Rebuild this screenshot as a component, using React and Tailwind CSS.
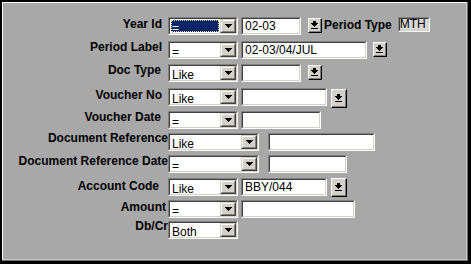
import React from 'react';

// 3D sunken edit box in the old Windows style
function Sunken({ className = '', bg = 'bg-white', children }) {
  return (
    <div className={`shrink-0 border border-t-[#808080] border-l-[#808080] border-b-white border-r-white ${className}`}>
      <div className={`flex h-full overflow-hidden border border-t-[#404040] border-l-[#404040] border-b-[#d4d0c8] border-r-[#d4d0c8] ${bg}`}>
        {children}
      </div>
    </div>
  );
}

function DropButton() {
  return (
    <div className="h-full w-[16px] shrink-0 border border-t-[#d4d0c8] border-l-[#d4d0c8] border-b-[#404040] border-r-[#404040]">
      <div className="flex h-full items-center justify-center border border-t-white border-l-white border-b-[#808080] border-r-[#808080] bg-[#d4d0c8]">
        <svg width="7" height="4" viewBox="0 0 7 4" shapeRendering="crispEdges">
          <path d="M0 0h7v1h-1v1h-1v1h-1v1h-1v-1h-1v-1h-1v-1h-1z" fill="#000" />
        </svg>
      </div>
    </div>
  );
}

function Combo({ value, width, selected }) {
  return (
    <Sunken className={`h-[18px] ${width}`}>
      <div className="min-w-0 flex-1 p-[1px]">
        <div
          className={`h-full pl-[1px] leading-[16px] whitespace-nowrap ${
            selected ? 'bg-[#0c246a] text-white outline-1 outline-dotted outline-[#e8dc8a] -outline-offset-1' : 'text-black'
          }`}
        >
          {value}
        </div>
      </div>
      <DropButton />
    </Sunken>
  );
}

function Field({ value, width, className = '' }) {
  return (
    <Sunken className={`h-[18px] ${width} ${className}`}>
      <div className="pl-[2px] leading-[14px] whitespace-nowrap text-black">{value}</div>
    </Sunken>
  );
}

function Lookup({ big, className = '' }) {
  return (
    <div
      className={`shrink-0 border border-t-white border-l-white border-b-black border-r-black ${
        big ? 'h-[19px] w-[16px]' : 'h-[15px] w-[14px]'
      } ${className}`}
    >
      <div className="flex h-full items-center justify-center border-b border-r border-b-[#808080] border-r-[#808080] bg-[#d4d0c8]">
        <svg width="7" height="8" viewBox="0 0 7 8" shapeRendering="crispEdges">
          <path d="M2 0h3v2h2v1h-1v1h-1v1h-1v1h-1v-1h-1v-1h-1v-1h-1v-1h2z" fill="#000" />
          <rect x="0" y="7" width="7" height="1" fill="#000" />
        </svg>
      </div>
    </div>
  );
}

const rows = [
  { label: 'Year Id', rowMt: '', lab: 'pr-[6px] pt-[1px]', op: '=', cw: 'w-[70px]', selected: true, input: '02-03', iw: 'w-[60px]', im: 'ml-[3px]', lookup: 'ml-[7px] mt-[1px]', period: true },
  { label: 'Period Label', rowMt: 'mt-[6px]', lab: 'pr-[6px]', op: '=', cw: 'w-[70px]', input: '02-03/04/JUL', iw: 'w-[126px]', im: 'ml-[3px]', lookup: 'ml-[6px] mt-[1px]' },
  { label: 'Doc Type', rowMt: 'mt-[5px]', lab: 'pr-[7px]', op: 'Like', cw: 'w-[70px]', input: '', iw: 'w-[60px]', im: 'ml-[3px]', lookup: 'ml-[7px] mt-[1px]' },
  { label: 'Voucher No', rowMt: 'mt-[6px]', lab: 'pr-[6px] pt-[1px]', op: 'Like', cw: 'w-[70px]', input: '', iw: 'w-[86px]', im: 'ml-[3px]', lookup: 'ml-[4px] mt-[1px]', big: true },
  { label: 'Voucher Date', rowMt: 'mt-[5px]', lab: 'pr-[7px]', op: '=', cw: 'w-[70px]', input: '', iw: 'w-[80px]', im: 'ml-[3px]' },
  { label: 'Document Reference', rowMt: 'mt-[4px]', lab: 'pr-0 -mt-[1px]', op: 'Like', cw: 'w-[91px]', input: '', iw: 'w-[107px]', im: 'ml-[9px]' },
  { label: 'Document Reference Date', rowMt: 'mt-[4px]', lab: 'pr-0', op: '=', cw: 'w-[91px]', input: '', iw: 'w-[79px]', im: 'ml-[9px]' },
  { label: 'Account Code', rowMt: 'mt-[5px]', lab: 'pr-[9px] pt-[2px]', op: 'Like', cw: 'w-[70px]', input: 'BBY/044', iw: 'w-[86px]', im: 'ml-[3px]', lookup: 'ml-[4px]', big: true },
  { label: 'Amount', rowMt: 'mt-[4px]', lab: 'pr-[2px] pt-[1px]', op: '=', cw: 'w-[70px]', input: '', iw: 'w-[114px]', im: 'ml-[3px]' },
  { label: 'Db/Cr', rowMt: 'mt-[3px]', lab: 'pr-0 -mt-[1px]', op: 'Both', cw: 'w-[70px]' },
];

export default function App() {
  return (
    <div className="h-[264px] w-[471px] bg-black pt-[2px] pl-[2px] pr-[3px] pb-[3px] font-['Liberation_Sans',Arial,sans-serif] text-[12px]">
      <div className="h-full border-r border-b border-r-[#6e6e6e] border-b-[#6e6e6e]">
        <div className="flex h-full flex-col border border-t-white border-l-white border-r-[#c8c8c8] border-b-[#c8c8c8] bg-[#a8a8a8] pt-[14px]">
          {rows.map((r) => (
            <div key={r.label} className={`flex h-[18px] items-start ${r.rowMt}`}>
              <div className={`w-[165px] shrink-0 text-right font-bold leading-[12px] whitespace-nowrap text-black ${r.lab}`}>
                {r.label}
              </div>
              <Combo value={r.op} width={r.cw} selected={r.selected} />
              {r.iw && <Field value={r.input} width={r.iw} className={r.im} />}
              {r.lookup && <Lookup big={r.big} className={r.lookup} />}
              {r.period && (
                <>
                  <div className="ml-[2px] pt-[2px] font-bold leading-[12px] whitespace-nowrap text-black">Period Type</div>
                  <Sunken className="ml-[6px] h-[15px] w-[32px]" bg="bg-[#d8d8d8]">
                    <div className="leading-[11px] text-black">MTH</div>
                  </Sunken>
                </>
              )}
            </div>
          ))}
        </div>
      </div>
    </div>
  );
}
